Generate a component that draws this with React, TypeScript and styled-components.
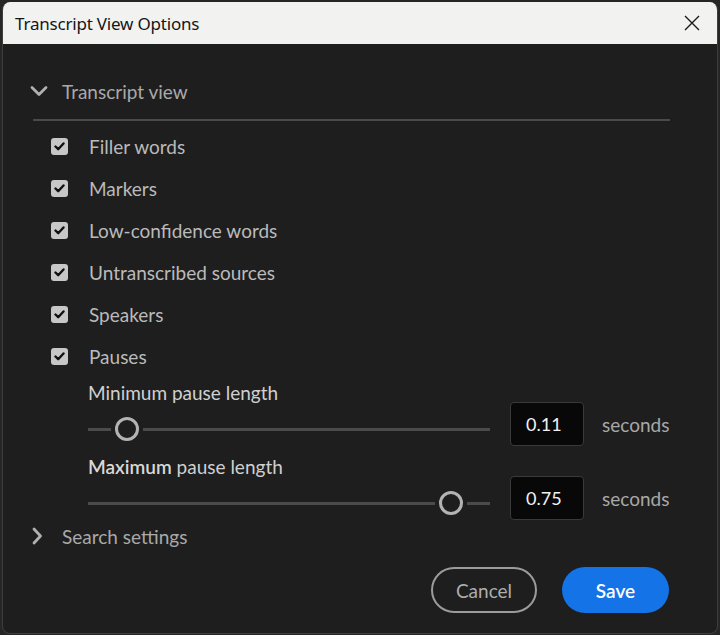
import React from "react";
import styled, { createGlobalStyle } from "styled-components";

const Global = createGlobalStyle`
  html, body { margin: 0; padding: 0; background: #262626; }
  body { font-family: Lato, "Noto Sans", sans-serif; }
  * { box-sizing: border-box; }
`;

const Page = styled.div`
  width: 720px;
  height: 635px;
  padding: 2px 2px 1px 2px;
  display: flex;
`;

const Dialog = styled.div`
  flex: 1;
  display: flex;
  flex-direction: column;
  border: 1px solid #3e3e3e;
  border-top: none;
  border-radius: 8px;
  overflow: hidden;
  background: #1e1e1e;
`;

const TitleBar = styled.div`
  height: 42px;
  flex: none;
  background: #f2f3f1;
  display: flex;
  align-items: center;
  justify-content: space-between;
  padding: 0 15px 0 12px;
`;

const Title = styled.div`
  font-family: "Noto Sans", "Open Sans", sans-serif;
  font-size: 17px;
  color: #161616;
  letter-spacing: -0.2px;
`;

const CloseBtn = styled.button`
  width: 20px;
  height: 20px;
  border: none;
  background: transparent;
  padding: 0;
  display: flex;
  align-items: center;
  justify-content: center;
`;

const Body = styled.div`
  flex: 1;
  display: flex;
  flex-direction: column;
  padding: 27px 47px 20px 27px;
`;

const SectionHeader = styled.div`
  height: 40px;
  display: flex;
  align-items: center;
  color: #a9a9a9;
  font-size: 19px;
`;

const ChevronBox = styled.div`
  width: 32px;
  display: flex;
  justify-content: flex-start;
`;

const Rule = styled.div`
  height: 2px;
  background: #4a4a4a;
  margin: 8px 0 4px 3px;
`;

const CheckRow = styled.label`
  height: 42px;
  display: flex;
  align-items: center;
  padding-left: 21px;
  gap: 21px;
  color: #bababa;
  font-size: 19px;
`;

const Box = styled.span`
  width: 17px;
  height: 17px;
  border-radius: 3px;
  background: #c7c7c7;
  display: flex;
  align-items: center;
  justify-content: center;
`;

const Settings = styled.div`
  padding-left: 58px;
  display: flex;
  flex-direction: column;
  gap: 9px;
  margin-top: 4px;
`;

const SettingRow = styled.div`
  display: flex;
  align-items: flex-end;
`;

const SliderCol = styled.div`
  flex: 1;
  display: flex;
  flex-direction: column;
`;

const SettingLabel = styled.div`
  height: 24px;
  line-height: 24px;
  font-size: 19px;
  color: #d0d0d0;
  b { font-weight: 600; color: #d8d8d8; }
`;

const Slider = styled.div`
  height: 41px;
  padding-top: 7px;
  display: flex;
  align-items: center;
`;

const TrackSeg = styled.div<{ $grow?: boolean }>`
  height: 3px;
  background: #4b4b4b;
  flex: ${(p) => (p.$grow ? "1" : "none")};
`;

const Thumb = styled.div`
  width: 24px;
  height: 24px;
  flex: none;
  border-radius: 50%;
  border: 3px solid #b3b3b3;
  margin: 0 4px;
`;

const NumberBox = styled.div`
  width: 74px;
  height: 44px;
  margin-left: 20px;
  background: #080808;
  border: 1px solid #3a3a3a;
  border-radius: 4px;
  color: #f2f2f2;
  font-size: 18px;
  display: flex;
  align-items: center;
  padding-left: 15px;
`;

const Unit = styled.div`
  width: 86px;
  height: 44px;
  padding-left: 18px;
  display: flex;
  align-items: center;
  font-size: 19px;
  color: #a8a8a8;
`;

const SearchRow = styled(SectionHeader)`
  height: 32px;
`;

const Footer = styled.div`
  margin-top: auto;
  display: flex;
  justify-content: flex-end;
  gap: 25px;
  padding-right: 1px;
`;

const PillButton = styled.button<{ $primary?: boolean }>`
  height: 46px;
  width: ${(p) => (p.$primary ? "107px" : "106px")};
  border-radius: 23px;
  font-family: Lato, "Noto Sans", sans-serif;
  font-size: 19px;
  font-weight: ${(p) => (p.$primary ? 600 : 400)};
  border: ${(p) => (p.$primary ? "none" : "2px solid #9c9c9c")};
  background: ${(p) => (p.$primary ? "#1473e6" : "transparent")};
  color: ${(p) => (p.$primary ? "#ffffff" : "#adadad")};
  padding: 0;
`;

const CheckMark = () => (
  <svg width="11" height="9" viewBox="0 0 11 9">
    <path d="M1.5 4.5 L4.2 7.2 L9.5 1.5" fill="none" stroke="#111" strokeWidth="2.4" strokeLinecap="round" strokeLinejoin="round" />
  </svg>
);

const ChevronDown = () => (
  <svg width="18" height="12" viewBox="0 0 18 12">
    <path d="M2 2.5 L9 9.5 L16 2.5" fill="none" stroke="#b0b0b0" strokeWidth="2.8" strokeLinecap="round" strokeLinejoin="round" />
  </svg>
);

const ChevronRight = () => (
  <svg width="18" height="18" viewBox="0 0 18 18">
    <path d="M4 2 L10.5 9 L4 16" fill="none" stroke="#b0b0b0" strokeWidth="2.8" strokeLinecap="round" strokeLinejoin="round" />
  </svg>
);

const items = [
  "Filler words",
  "Markers",
  "Low-confidence words",
  "Untranscribed sources",
  "Speakers",
  "Pauses",
];

const settings = [
  { label: <>Minimum pause length</>, value: "0.11", pct: 9.7 },
  { label: <><b>Maximum</b> pause length</>, value: "0.75", pct: 90.3 },
];

export default function App() {
  return (
    <>
      <Global />
      <Page>
        <Dialog>
          <TitleBar>
            <Title>Transcript View Options</Title>
            <CloseBtn aria-label="Close">
              <svg width="16" height="16" viewBox="0 0 16 16">
                <path d="M1 1 L15 15 M15 1 L1 15" stroke="#1a1a1a" strokeWidth="1.4" />
              </svg>
            </CloseBtn>
          </TitleBar>
          <Body>
            <SectionHeader>
              <ChevronBox><ChevronDown /></ChevronBox>
              Transcript view
            </SectionHeader>
            <Rule />
            {items.map((t) => (
              <CheckRow key={t}>
                <Box><CheckMark /></Box>
                {t}
              </CheckRow>
            ))}
            <Settings>
              {settings.map((s, i) => (
                <SettingRow key={i}>
                  <SliderCol>
                    <SettingLabel>{s.label}</SettingLabel>
                    <Slider>
                      <TrackSeg style={{ width: `calc(${s.pct}% - 16px)` }} />
                      <Thumb />
                      <TrackSeg $grow />
                    </Slider>
                  </SliderCol>
                  <NumberBox>{s.value}</NumberBox>
                  <Unit>seconds</Unit>
                </SettingRow>
              ))}
            </Settings>
            <SearchRow>
              <ChevronBox><ChevronRight /></ChevronBox>
              Search settings
            </SearchRow>
            <Footer>
              <PillButton>Cancel</PillButton>
              <PillButton $primary>Save</PillButton>
            </Footer>
          </Body>
        </Dialog>
      </Page>
    </>
  );
}
